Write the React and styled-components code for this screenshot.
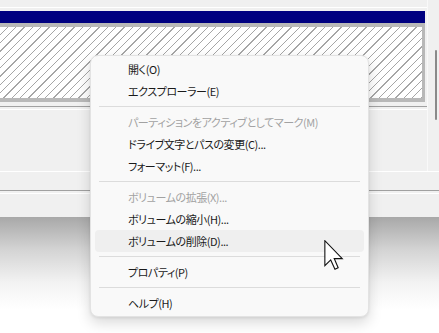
import React from 'react'
import styled, { createGlobalStyle } from 'styled-components'

const GlobalStyle = createGlobalStyle`
  html, body {
    margin: 0;
    padding: 0;
    background: #ffffff;
  }
  body {
    font-family: "Noto Sans CJK JP", "Noto Sans", sans-serif;
  }
`

const Screen = styled.div`
  position: relative;
  width: 439px;
  height: 333px;
  overflow: hidden;
  display: flex;
  flex-direction: column;
  background: #ffffff;
`

const WindowBody = styled.div`
  height: 217px;
  background: #f0f0f0;
  display: flex;
  flex-direction: column;
`

const UpperPane = styled.div`
  height: 171px;
  display: flex;
`

const GraphView = styled.div`
  width: 427px;
  padding-top: 7px;
  display: flex;
  flex-direction: column;
`

const DiskFrame = styled.div`
  width: 425px;
  height: 91px;
  border-top: 1px solid #ffffff;
  border-right: 1px solid #ffffff;
  padding: 3px 2px 4px 0;
  display: flex;
  flex-direction: column;
`

const VolumeHeader = styled.div`
  height: 12px;
  background: #000080;
`

const Hatch = styled.div`
  flex: 1;
  border: solid #b8b8b8;
  border-width: 4px 3px 4px 0;
  background-color: #ffffff;
  background-image: repeating-linear-gradient(
    135deg,
    #ffffff 0 5px,
    #a6a6a6 5px 5.9px
  );
`

const Sunken = styled.div`
  height: 2px;
  border-top: 1px solid #a0a0a0;
  border-bottom: 1px solid #ffffff;
`

const ScrollTrack = styled.div`
  width: 11px;
  border-left: 1px solid #f9f9f9;
  display: flex;
  flex-direction: column;
`

const ScrollThumb = styled.div`
  margin: 50px 0 0 7px;
  width: 2px;
  height: 70px;
  border-radius: 1px;
  background: #8a8a8a;
`

const StatusStrip = styled.div`
  height: 18px;
  border-top: 1px solid #ffffff;
`

const BottomGap = styled.div`
  flex: 1;
`

const Backdrop = styled.div`
  flex: 1;
  background: linear-gradient(
    to bottom,
    #a8a8a8 0px,
    #d4d4d4 33px,
    #f3f3f3 66px,
    #ffffff 92px
  );
`

const Menu = styled.div`
  position: absolute;
  left: 90px;
  top: 55px;
  width: 277px;
  padding: 2px 0;
  background: #f9f9f9;
  border: 1px solid #e3e3e3;
  border-radius: 8px;
  box-shadow: 0 6px 14px rgba(0, 0, 0, 0.15), 0 1px 3px rgba(0, 0, 0, 0.08);
  display: flex;
  flex-direction: column;
`

const Item = styled.div`
  height: 22px;
  margin: 0 4px;
  padding-left: 33px;
  border-radius: 4px;
  display: flex;
  align-items: center;
  font-size: 11px;
  letter-spacing: -0.45px;
  font-feature-settings: "palt";
  white-space: nowrap;
  color: ${p => (p.$disabled ? '#a2a2a2' : '#1a1a1a')};
  background: ${p => (p.$hover ? '#efefef' : 'transparent')};
`

const Separator = styled.div`
  height: 1px;
  margin: 4px 8px;
  background: #dcdcdc;
`

const Pointer = styled.svg`
  position: absolute;
  left: 324px;
  top: 240px;
`

const entries = [
  { label: '開く(O)' },
  { label: 'エクスプローラー(E)' },
  { sep: true },
  { label: 'パーティションをアクティブとしてマーク(M)', disabled: true },
  { label: 'ドライブ文字とパスの変更(C)...' },
  { label: 'フォーマット(F)...' },
  { sep: true },
  { label: 'ボリュームの拡張(X)...', disabled: true },
  { label: 'ボリュームの縮小(H)...' },
  { label: 'ボリュームの削除(D)...', hover: true },
  { sep: true },
  { label: 'プロパティ(P)' },
  { sep: true },
  { label: 'ヘルプ(H)' },
]

export default function App() {
  return (
    <>
      <GlobalStyle />
      <Screen>
        <WindowBody>
          <UpperPane>
            <GraphView>
              <DiskFrame>
                <VolumeHeader />
                <Hatch />
              </DiskFrame>
              <Sunken />
            </GraphView>
            <ScrollTrack>
              <ScrollThumb />
            </ScrollTrack>
          </UpperPane>
          <StatusStrip />
          <Sunken />
          <BottomGap />
        </WindowBody>
        <Backdrop />

        <Menu>
          {entries.map((e, i) =>
            e.sep ? (
              <Separator key={i} />
            ) : (
              <Item key={i} $disabled={e.disabled} $hover={e.hover}>
                {e.label}
              </Item>
            )
          )}
        </Menu>

        <Pointer width="20" height="30" viewBox="0 0 13.5 20.5">
          <path
            d="M0.5 0.5 L0.5 17.5 L4.5 13.6 L7.4 20 L9.6 19 L6.9 12.7 L12.4 12.7 Z"
            fill="#ffffff"
            stroke="#111111"
            strokeWidth="0.75"
            strokeLinejoin="miter"
          />
        </Pointer>
      </Screen>
    </>
  )
}
